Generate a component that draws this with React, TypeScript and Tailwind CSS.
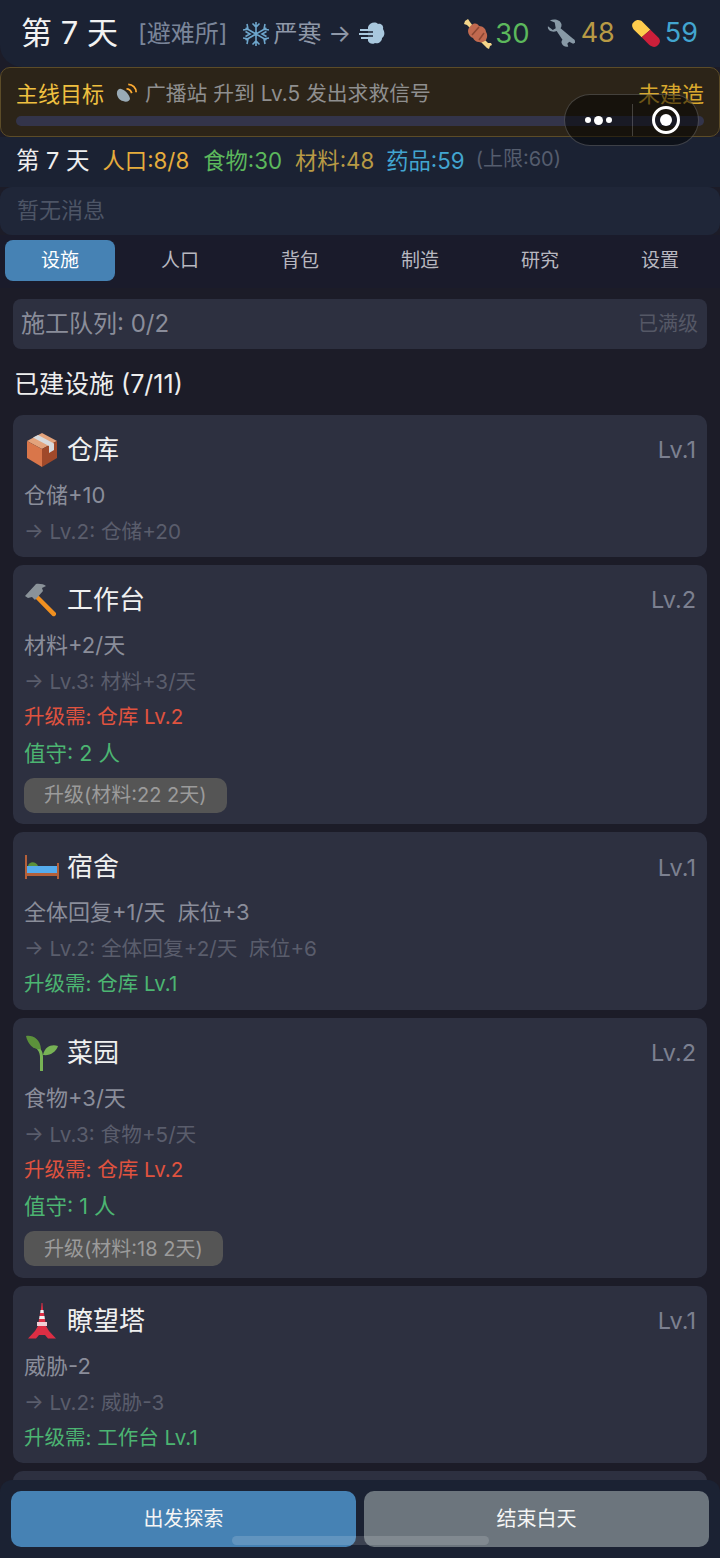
import React from "react";

const Box = () => (
  <svg width="32" height="36" viewBox="0 0 32 36">
    <path d="M16 1 31 9 16 17 1 9Z" fill="#e3a37c" />
    <path d="M1 9 16 17V35L1 26Z" fill="#d9764a" />
    <path d="M31 9 16 17V35L31 26Z" fill="#a0492a" />
    <path d="M7 5.500 23 14V21L28 18V11.500L12 3Z" fill="#d7dadd" />
  </svg>
);
const Hammer = () => (
  <svg width="36" height="34" viewBox="0 0 36 34">
    <path d="M14 12 32 30a2.500 2.500 0 0 1-3.500 3L11 15Z" fill="#f19020" />
    <path d="M1 13 12 1c4-.5 8 .5 10 2l-4 2 1 3-8 9-3-3-4 1Z" fill="#8a9299" />
  </svg>
);
const Bed = () => (
  <svg width="36" height="24" viewBox="0 0 36 24">
    <path d="M1 0h2v24H1ZM33 8h2v16h-2Z" fill="#b4603a" />
    <path d="M3 18h30v3H3Z" fill="#b4603a" />
    <path d="M3 11h30v7H3Z" fill="#55acee" />
    <path d="M4 11c1-5 8-5 10 0Z" fill="#5c913b" />
  </svg>
);
const Sprout = () => (
  <svg width="34" height="36" viewBox="0 0 34 36">
    <path d="M15 36V22C15 17 12 13 8 11l2-2c5 3 8 7 8 13v14Z" fill="#77b255" />
    <path d="M1 1c7-1 14 3 15 13C9 15 3 10 1 1Z" fill="#5c913b" />
    <path d="M33 11c-6-2-13 0-15 9 7 1 13-3 15-9Z" fill="#77b255" />
  </svg>
);
const Tower = () => (
  <svg width="30" height="36" viewBox="0 0 30 36">
    <path d="M14.500 0h1l.5 7h-2Z" fill="#dd2e44" />
    <path d="M13.500 7h3l.3 3h-3.600Z" fill="#f2f2f2" />
    <path d="M13 10h4l.4 3h-4.800Z" fill="#dd2e44" />
    <path d="M12.500 13h5l.4 3h-5.800Z" fill="#f2f2f2" />
    <path d="M12 16h6l.4 3h-6.800Z" fill="#dd2e44" />
    <path d="M10 19h10v4H10Z" fill="#f0d0d6" />
    <path d="M11 23h8l3 5 7 7.500h-8l-3-3.500h-6l-3 3.500H1l7-7.500Z" fill="#dd2e44" />
  </svg>
);
const Snow = () => (
  <svg width="26" height="26" viewBox="0 0 26 26" stroke="#6ea6cc" strokeWidth="1.600" fill="none">
    <path d="M13 1v24M2.600 7l20.800 12M23.400 7 2.600 19M9.500 2.500 13 6l3.500-3.500M9.500 23.500 13 20l3.500 3.500M2.500 10.500 7 13l-4.500 2.500M23.500 10.500 19 13l4.500 2.500M4 3l1 5-5 1M22 23l-1-5 5-1M22 3l-1 5 5 1M4 23l1-5-5-1" />
  </svg>
);
const Wind = () => (
  <svg width="26" height="26" viewBox="0 0 26 26">
    <path d="M9 6c1-4 7-6 10-3 3-1 6 2 5 5 2 3 2 7-1 9 0 4-4 6-7 5-3 2-6 0-7-2Z" fill="#a9c8de" />
    <path d="M1 9h10M0 13h11M2 17h9" stroke="#a9c8de" strokeWidth="2" />
    <path d="M9 11h5M9 15h5" stroke="#1b2233" strokeWidth="1.500" />
  </svg>
);
const Meat = () => (
  <svg width="28" height="30" viewBox="0 0 28 30">
    <path d="M4 0 6 3 9 7 7 10 3 6 0 5 1 2ZM20 20l4 4 3 0 1 2-2 1-1 3-2-1-6-6Z" fill="#f4d58a" />
    <path d="M9 5c3-1 5 0 6 2 4 0 7 3 7 6 2 3 1 6 0 8-2 2-5 3-7 2-3 0-5-2-6-4-3-1-5-4-5-7 0-3 2-5 5-7Z" fill="#c1694f" />
    <path d="M15 8 8 16M20 14l-5 7" stroke="#8c4732" strokeWidth="1.500" />
  </svg>
);
const Wrench = () => (
  <svg width="29" height="29" viewBox="0 0 30 29">
    <path d="M1 7 6 11 9 9 8 3 3 1c4-2 11-1 12 4 0 2 0 3-1 4l13 11c2 1 2 2 2 4l-2 1-4-2-2 2 1 3c-3 1-6-1-7-4 0-1 0-2 1-3L10 12c-5 2-10-1-9-5Z" fill="#8899a6" />
  </svg>
);
const Pill = () => (
  <svg width="29" height="29" viewBox="0 0 30 30">
    <path d="M2 3c3-3 7-2 9 0l8 8-9 8-8-8c-2-2-3-6 0-8Z" fill="#ffcc4d" />
    <path d="M19 11l8 8c3 3 2 6 0 8-3 3-6 2-9 0l-8-8Z" fill="#cc1f3a" />
  </svg>
);
const Dish = () => (
  <svg width="21" height="22" viewBox="0 0 24 24">
    <path d="M5 6c5 1 10 6 11 11 0 3-4 5-8 3-4-1-7-5-7-9 0-3 2-5 4-5Z" fill="#99aab5" />
    <path d="M12 6c3 0 5 2 6 5M14 1c5 0 9 4 9 9" stroke="#ffac33" strokeWidth="2" fill="none" />
  </svg>
);

type CardProps = {
  icon: React.ReactNode;
  name: string;
  level: string;
  desc: string;
  next: string;
  req?: string;
  reqMet?: boolean;
  guard?: string;
  upgrade?: string;
};

const Card = ({ icon, name, level, desc, next, req, reqMet, guard, upgrade }: CardProps) => (
  <div className="rounded-[10px] bg-[#2d3040] pt-[17px] pb-[7.700px] pl-[11px] pr-[11px]">
    <div className="flex h-[36px] items-center">
      <span className="flex w-[36px] justify-center">{icon}</span>
      <span className="ml-[7px] text-[26px] leading-[36px] text-[#f0f0f0]">{name}</span>
      <span className="ml-auto text-[23.500px] text-[#7c8090]">{level}</span>
    </div>
    <div className="mt-[9px] h-[37px] whitespace-pre text-[22px] leading-[36px] text-[#8a8d9a]">{desc}</div>
    <div className="h-[35px] whitespace-pre text-[20.700px] leading-[36px] text-[#5a5d6c]">{next}</div>
    {req && (
      <div className={`h-[36px] text-[20.500px] leading-[36px] ${reqMet ? "text-[#4cb572]" : "text-[#e0533f]"}`}>{req}</div>
    )}
    {guard && <div className="h-[36px] text-[21.500px] leading-[36px] text-[#4cb572]">{guard}</div>}
    {upgrade && (
      <div className="mt-[7px] mb-[4px] flex h-[35px] w-fit items-center rounded-[10px] bg-[#555555] px-[20px] text-[20px] text-[#9b9b9b]">
        {upgrade}
      </div>
    )}
  </div>
);

export default function App() {
  return (
    <div
      className="relative flex h-[1558px] w-[720px] flex-col overflow-hidden bg-[#1c1c28]"
      style={{ fontFamily: 'Inter, "Noto Sans CJK SC", sans-serif' }}
    >
      <div className="flex h-[67px] shrink-0 items-center rounded-bl-[22px] bg-[#1b2233] pl-[21px] pr-[22px]">
        <span className="text-[31px] whitespace-pre text-[#f2f2f2]">第 7 天</span>
        <span className="ml-[20px] text-[24px] text-[#7a8599]">[避难所]</span>
        <span className="ml-[15px]"><Snow /></span>
        <span className="ml-[5px] text-[24px] whitespace-pre text-[#8f98a8]">严寒 →</span>
        <span className="ml-[8px]"><Wind /></span>
        <div className="ml-auto flex items-center">
          <Meat />
          <span className="ml-[3px] text-[27.500px] text-[#5cb85c]">30</span>
          <span className="ml-[17px]"><Wrench /></span>
          <span className="ml-[5px] text-[27px] text-[#b89a45]">48</span>
          <span className="ml-[17px]"><Pill /></span>
          <span className="ml-[4px] text-[27px] text-[#42a5d0]">59</span>
        </div>
      </div>

      <div className="h-[70px] shrink-0 rounded-[10px] border border-[#5c4c28] bg-[#2c2418] px-[15px] pt-[11px]">
        <div className="flex h-[30px] items-center">
          <span className="text-[22px] text-[#f0c040]">主线目标</span>
          <span className="ml-[12px]"><Dish /></span>
          <span className="ml-[8px] text-[20.800px] text-[#8f8f8f]">广播站 升到 Lv.5 发出求救信号</span>
          <span className="ml-auto text-[22px] text-[#d9a92e]">未建造</span>
        </div>
        <div className="mt-[7px] h-[10px] rounded-full bg-[#33344a]" />
      </div>

      <div className="flex h-[50px] shrink-0 items-center bg-[#1b2233] pb-[2px] pl-[16px]">
        <span className="text-[23.500px] whitespace-pre text-[#eeeeee]">第 7 天</span>
        <span className="ml-[13px] text-[22.300px] text-[#e6ad3c]">人口:8/8</span>
        <span className="ml-[14px] text-[22.300px] text-[#5cb85c]">食物:30</span>
        <span className="ml-[13px] text-[22.300px] text-[#b89a45]">材料:48</span>
        <span className="ml-[12px] text-[22.300px] text-[#42a5d0]">药品:59</span>
        <span className="ml-[11px] -translate-y-[2px] text-[20px] text-[#555d6e]">(上限:60)</span>
      </div>

      <div className="flex h-[48px] shrink-0 items-center rounded-[12px] bg-[#1f2638] pb-[1px] pl-[17px] text-[22px] text-[#4d5566]">暂无消息</div>

      <div className="grid h-[53px] shrink-0 grid-cols-6 items-center gap-[10px] bg-[#1a1b2b] px-[5px] pb-[2px]">
        {["设施", "人口", "背包", "制造", "研究", "设置"].map((t, i) => (
          <div
            key={t}
            className={`flex h-[41px] items-center justify-center rounded-[8px] pt-[2px] text-[19px] ${i === 0 ? "bg-[#4682b4] text-white" : "text-[#b8b8c0]"}`}
          >
            {t}
          </div>
        ))}
      </div>

      <div className="min-h-0 flex-1 overflow-hidden px-[13px] pt-[11px]">
        <div className="flex h-[50px] items-center justify-between rounded-[8px] bg-[#2d3040] pl-[8px] pr-[9px]">
          <span className="text-[24px] text-[#8a8d9a]">施工队列: 0/2</span>
          <span className="text-[20px] text-[#555866]">已满级</span>
        </div>
        <div className="flex h-[66px] items-center pl-[1px] pt-[5px] text-[25px] text-[#eeeeee]">已建设施 (7/11)</div>
        <div className="flex flex-col gap-[8px]">
          <Card icon={<Box />} name="仓库" level="Lv.1" desc="仓储+10" next="→ Lv.2: 仓储+20" />
          <Card
            icon={<Hammer />}
            name="工作台"
            level="Lv.2"
            desc="材料+2/天"
            next="→ Lv.3: 材料+3/天"
            req="升级需: 仓库 Lv.2"
            guard="值守: 2 人"
            upgrade="升级(材料:22 2天)"
          />
          <Card
            icon={<Bed />}
            name="宿舍"
            level="Lv.1"
            desc="全体回复+1/天  床位+3"
            next="→ Lv.2: 全体回复+2/天  床位+6"
            req="升级需: 仓库 Lv.1"
            reqMet
          />
          <Card
            icon={<Sprout />}
            name="菜园"
            level="Lv.2"
            desc="食物+3/天"
            next="→ Lv.3: 食物+5/天"
            req="升级需: 仓库 Lv.2"
            guard="值守: 1 人"
            upgrade="升级(材料:18 2天)"
          />
          <Card
            icon={<Tower />}
            name="瞭望塔"
            level="Lv.1"
            desc="威胁-2"
            next="→ Lv.2: 威胁-3"
            req="升级需: 工作台 Lv.1"
            reqMet
          />
          <div className="h-[40px] rounded-[10px] bg-[#2d3040]" />
        </div>
      </div>

      <div className="flex h-[78px] shrink-0 gap-[8px] rounded-t-[12px] bg-[#1b2233] px-[11px] pt-[11px]">
        <div className="flex h-[56px] flex-1 items-center justify-center rounded-[10px] bg-[#4682b4] text-[20px] text-[#f5f5f5]">出发探索</div>
        <div className="flex h-[56px] flex-1 items-center justify-center rounded-[10px] bg-[#6c757d] text-[20px] text-[#f5f5f5]">结束白天</div>
      </div>

      <div className="absolute left-[232px] top-[1536px] h-[9px] w-[257px] rounded-full bg-[#ffffff]/15" />

      <div className="absolute left-[564px] top-[94px] flex h-[52px] w-[135px] items-center rounded-full border border-[#ffffff]/20 bg-[#000000]/50">
        <div className="flex w-[67px] items-center justify-center gap-[3px]">
          <span className="h-[6px] w-[6px] rounded-full bg-white" />
          <span className="h-[9px] w-[9px] rounded-full bg-white" />
          <span className="h-[6px] w-[6px] rounded-full bg-white" />
        </div>
        <div className="h-[32px] w-px bg-[#ffffff]/20" />
        <div className="flex flex-1 items-center justify-center">
          <div className="flex h-[28px] w-[28px] items-center justify-center rounded-full border-[3px] border-white">
            <span className="h-[12px] w-[12px] rounded-full bg-white" />
          </div>
        </div>
      </div>
    </div>
  );
}
